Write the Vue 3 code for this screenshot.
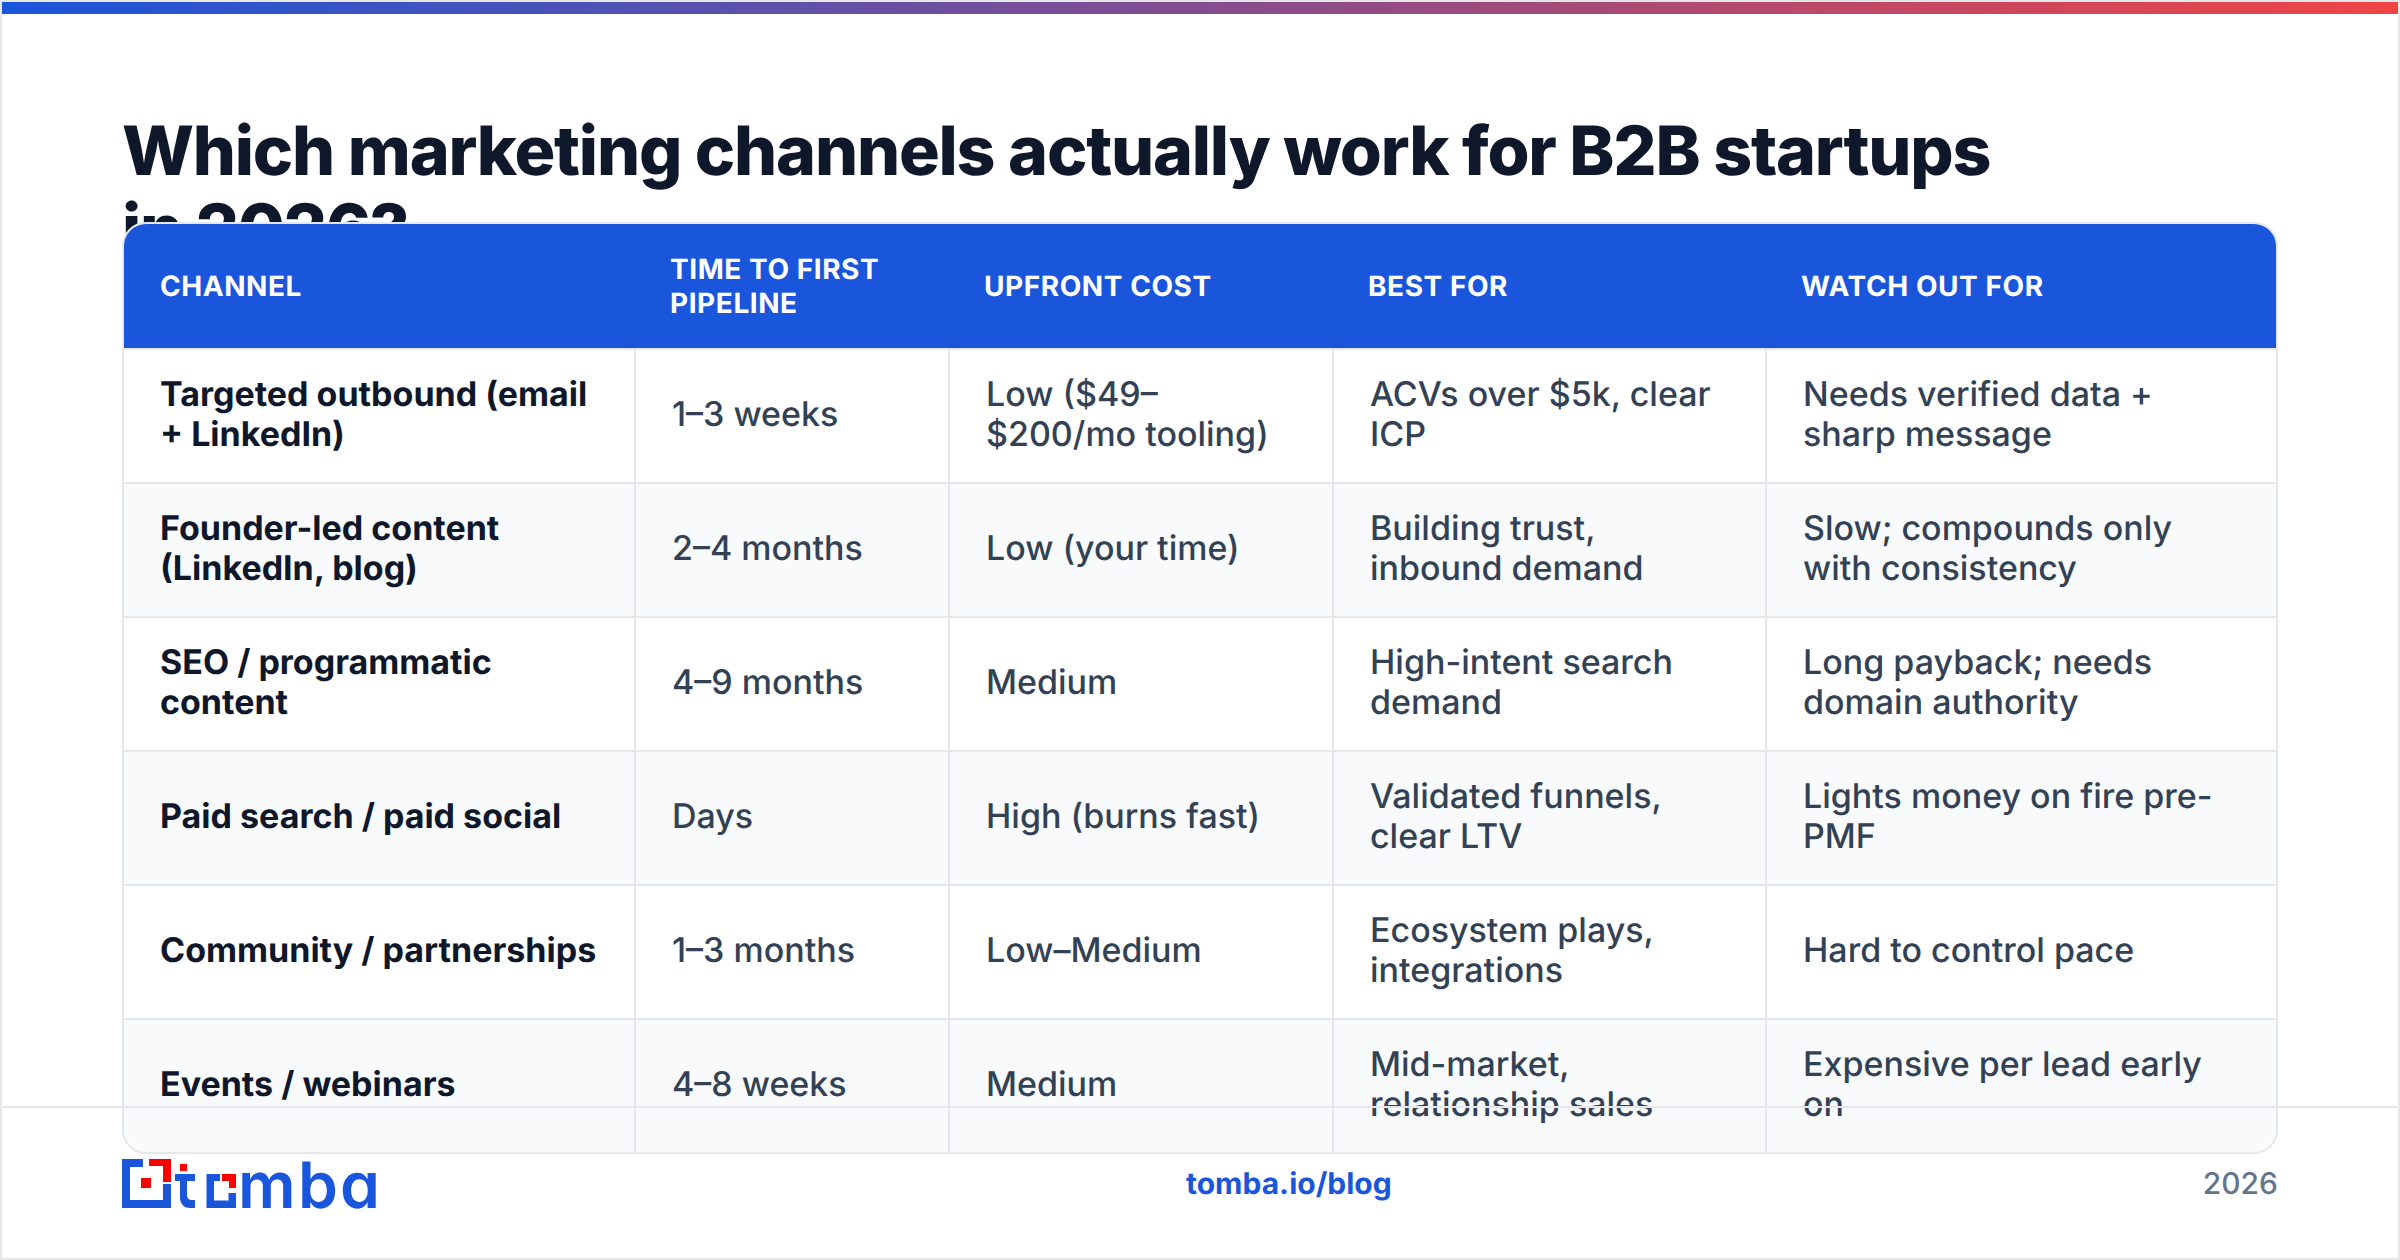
<template>
  <div class="slide">
    <div class="top-bar"></div>
    <h1 class="title">Which marketing channels actually work for B2B startups in 2026?</h1>

    <div class="table-wrap">
      <table>
        <colgroup>
          <col class="c1"><col class="c2"><col class="c3"><col class="c4"><col class="c5">
        </colgroup>
        <thead>
          <tr>
            <th>Channel</th>
            <th>Time to first pipeline</th>
            <th>Upfront cost</th>
            <th>Best for</th>
            <th>Watch out for</th>
          </tr>
        </thead>
        <tbody>
          <tr v-for="row in rows" :key="row.channel">
            <td class="channel">{{ row.channel }}</td>
            <td>{{ row.time }}</td>
            <td>{{ row.cost }}</td>
            <td>{{ row.best }}</td>
            <td>{{ row.watch }}</td>
          </tr>
        </tbody>
      </table>
    </div>

    <footer class="footer">
      <svg class="logo" viewBox="0 0 254 49" width="254" height="49" role="img" aria-label="tomba">
        <!-- square mark -->
        <path fill="#1a56db" d="M0 0h21v8H8v33h33V25h8v24H0z" />
        <path fill="#f00" d="M27 0h22v23h-8V7H27z" />
        <rect x="19" y="19" width="10" height="10" fill="#f00" />
        <!-- t -->
        <rect x="58" y="5" width="7" height="7" fill="#f00" />
        <path fill="#1a56db" d="M53 15h20v7h-8v14c0 3 2 5 5 5h3v8h-5c-7 0-10-5-10-11V22h-5z" />
        <!-- square o -->
        <path fill="#1a56db" d="M84.5 15H98v7h-6v19.5h14.5V34h7.5v15H84.5z" />
        <path fill="#f00" d="M100 15h14v14h-7v-7h-7z" />
        <text class="logo-text" x="116 176 218" y="49">mba</text>
      </svg>
      <span class="link">tomba.io/blog</span>
      <span class="year">2026</span>
    </footer>
  </div>
</template>

<script setup>
const rows = [
  { channel: 'Targeted outbound (email + LinkedIn)', time: '1–3 weeks', cost: 'Low ($49–$200/mo tooling)', best: 'ACVs over $5k, clear ICP', watch: 'Needs verified data + sharp message' },
  { channel: 'Founder-led content (LinkedIn, blog)', time: '2–4 months', cost: 'Low (your time)', best: 'Building trust, inbound demand', watch: 'Slow; compounds only with consistency' },
  { channel: 'SEO / programmatic content', time: '4–9 months', cost: 'Medium', best: 'High-intent search demand', watch: 'Long payback; needs domain authority' },
  { channel: 'Paid search / paid social', time: 'Days', cost: 'High (burns fast)', best: 'Validated funnels, clear LTV', watch: 'Lights money on fire pre-PMF' },
  { channel: 'Community / partnerships', time: '1–3 months', cost: 'Low–Medium', best: 'Ecosystem plays, integrations', watch: 'Hard to control pace' },
  { channel: 'Events / webinars', time: '4–8 weeks', cost: 'Medium', best: 'Mid-market, relationship sales', watch: 'Expensive per lead early on' }
]
</script>

<style>
html, body {
  margin: 0;
  background: #fff;
}
</style>

<style scoped>
.slide {
  position: relative;
  width: 2400px;
  height: 1260px;
  box-sizing: border-box;
  border: 2px solid #e5e7eb;
  background: #fff;
  overflow: hidden;
  font-family: Inter, "Liberation Sans", sans-serif;
  text-rendering: geometricPrecision;
}

.top-bar {
  height: 12px;
  background: linear-gradient(90deg, #1a56db, #ef4444);
}

.title {
  margin: 0;
  padding: 98px 120px 0;
  height: 208px;
  box-sizing: border-box;
  font-size: 68px;
  line-height: 78px;
  font-weight: 800;
  letter-spacing: -1.2px;
  color: #0f172a;
  max-width: 2156px;
}

.table-wrap {
  position: relative;
  margin: 0 120px;
  height: 932px;
  box-sizing: border-box;
  border: 2px solid #e5e7eb;
  border-radius: 24px;
  overflow: hidden;
  background: #fff;
}

table {
  width: 100%;
  table-layout: fixed;
  border-collapse: collapse;
}

.c1 { width: 511px; }
.c2 { width: 314px; }
.c3 { width: 384px; }
.c4 { width: 433px; }

th {
  height: 122px;
  padding: 2px 36px 0 35px;
  background: #1a56db;
  color: #fff;
  font-size: 28px;
  line-height: 1.2;
  font-weight: 700;
  letter-spacing: 0.56px;
  text-transform: uppercase;
  text-align: left;
  border-bottom: 2px solid #e5e7eb;
}

th:first-child {
  padding-left: 36px;
}

td {
  height: 129px;
  padding: 0 36px 3px;
  border-right: 2px solid #e5e7eb;
  border-bottom: 2px solid #e5e7eb;
  font-size: 34px;
  line-height: 40px;
  font-weight: 500;
  color: #334155;
}

td:last-child {
  border-right: none;
}

tbody tr:nth-child(even) td {
  background: #f8fafc;
}

.channel {
  font-weight: 700;
  color: #0f172a;
}

.footer {
  position: absolute;
  left: 0;
  right: 0;
  bottom: 0;
  height: 152px;
  box-sizing: border-box;
  padding: 0 120px;
  border-top: 2px solid #e5e7eb;
  display: flex;
  justify-content: space-between;
  align-items: center;
}

.logo {
  display: block;
  margin-right: -1px;
  overflow: visible;
}

.logo-text {
  font-size: 64px;
  font-weight: 600;
  font-feature-settings: "cv11";
  fill: #1a56db;
}

.link {
  margin-top: 2px;
  color: #1a56db;
  font-size: 30px;
  font-weight: 700;
}

.year {
  margin-top: 2px;
  color: #64748b;
  font-size: 30px;
  font-weight: 500;
}
</style>
